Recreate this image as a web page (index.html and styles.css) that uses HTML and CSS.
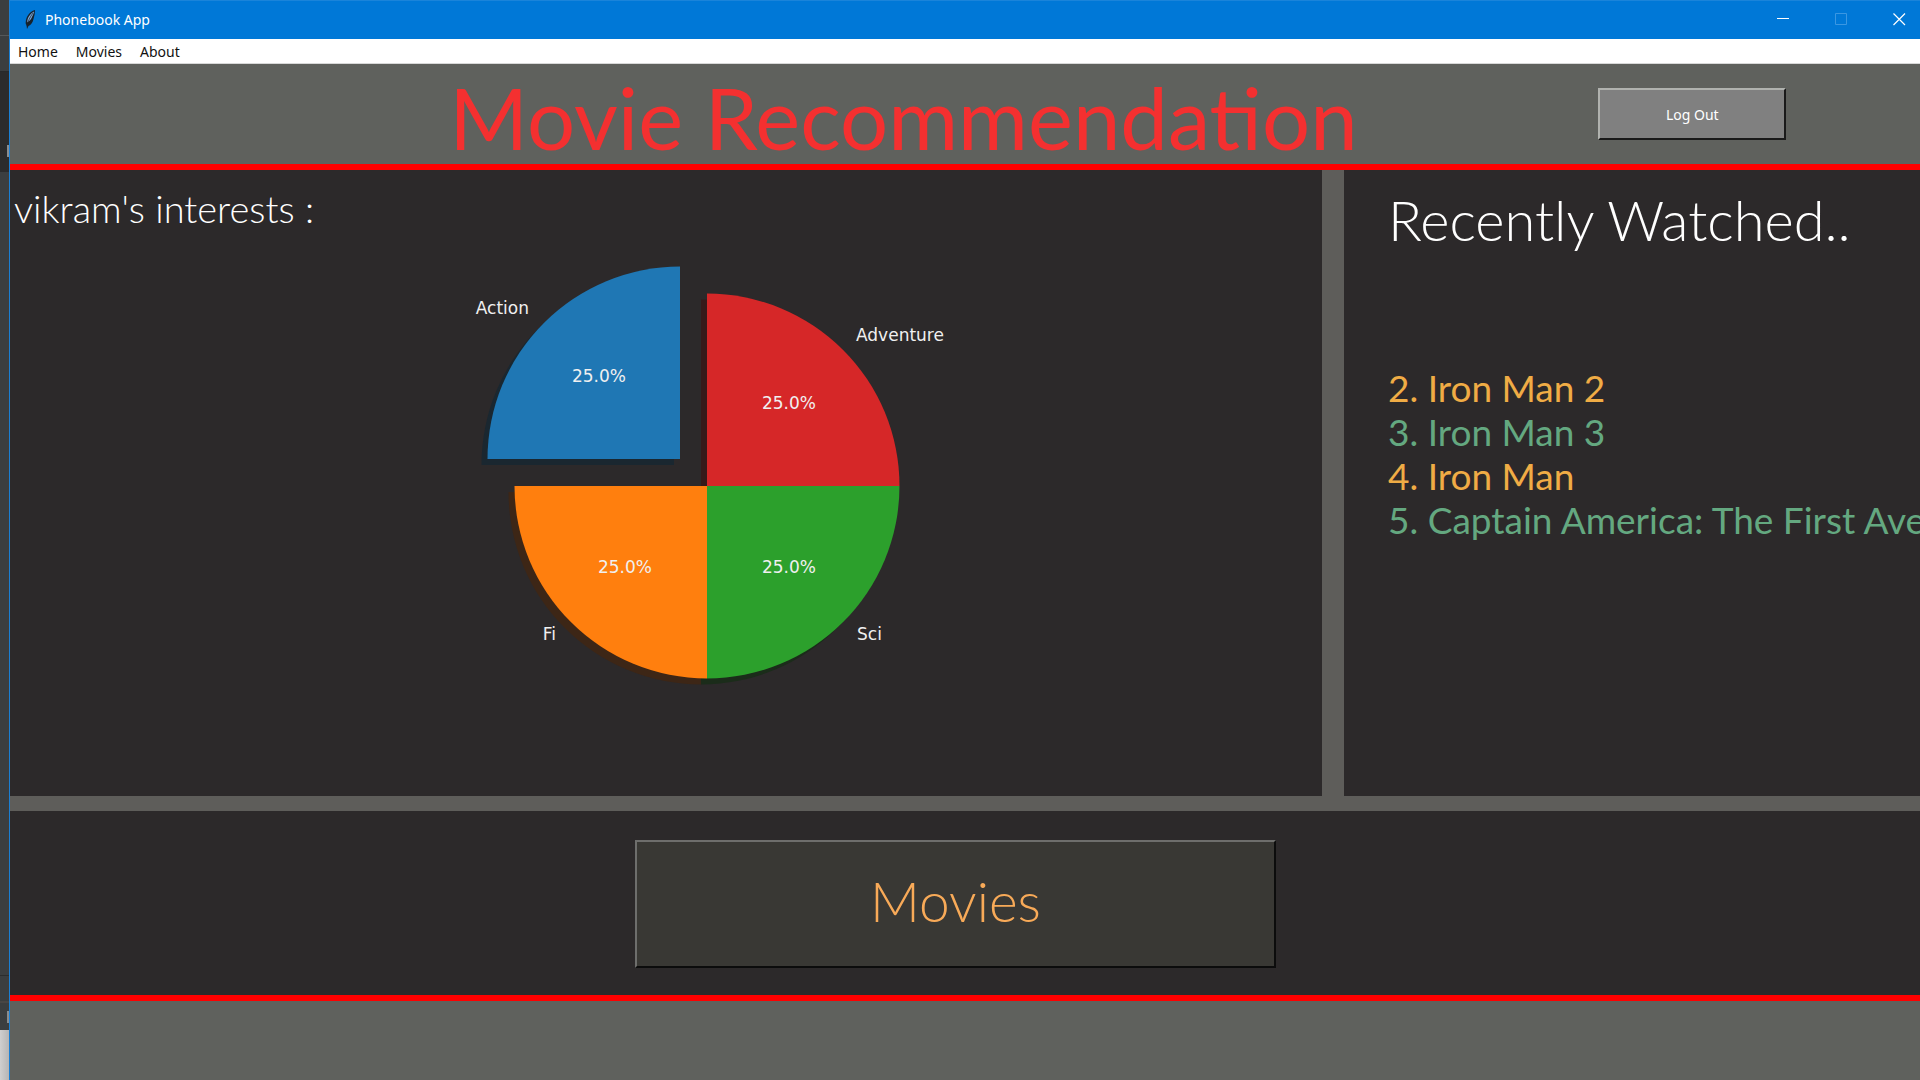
FILE: index.html
```html
<!DOCTYPE html>
<html lang="en">
<head>
<meta charset="utf-8">
<title>Phonebook App</title>
<link rel="stylesheet" href="styles.css">
</head>
<body>
<div class="backdrop" aria-hidden="true">
  <div class="backdrop-bar"></div>
  <div class="backdrop-tabs"></div>
  <div class="backdrop-dark"><span class="backdrop-mark"></span></div>
  <div class="backdrop-body"></div>
  <div class="backdrop-status"></div>
  <div class="backdrop-task"><span class="backdrop-mark"></span></div>
  <div class="backdrop-page"></div>
</div>
<div class="window">
  <div class="titlebar">
    <svg class="feather" width="16" height="22" viewBox="0 0 16 22" aria-hidden="true">
      <path d="M12 1C8 2 4 6 3 11c-.5 3-.5 4 .5 5L4 20l1.500-3C8 16 10 13 10.500 10 11.500 7 12 4 12 1z" fill="#16222c"/>
      <path d="M11 2.500C7 5 4.500 8 4.200 13.500c2-1 4-3 4.800-5.500 1-2 1.800-3.500 2-5.500z" fill="#7fa9d8"/>
      <path d="M10 4C7 8 5 12 4 17" fill="none" stroke="#16222c" stroke-width=".7"/>
    </svg>
    <span class="app-name">Phonebook App</span>
    <div class="controls">
      <button class="control" aria-label="Minimize"><svg width="13" height="13" viewBox="0 0 13 13"><path d="M0 5.500h12" stroke="#fff"/></svg></button>
      <button class="control" aria-label="Maximize" disabled><svg width="13" height="13" viewBox="0 0 13 13"><path d="M.5.5h11v11H.5z" fill="none" stroke="#3b97e2"/></svg></button>
      <button class="control" aria-label="Close"><svg width="13" height="13" viewBox="0 0 13 13"><path d="M.5.5l11.500 11.500M12 .5L.5 12" stroke="#fff" stroke-width="1.200"/></svg></button>
    </div>
  </div>
  <nav class="menu">
    <a href="#home">Home</a>
    <a href="#movies">Movies</a>
    <a href="#about">About</a>
  </nav>
  <header class="header">
    <h1 class="title">Movie Recommendation</h1>
    <button class="logout">Log Out</button>
  </header>
  <main class="panels">
    <section class="interests">
      <h2 class="interests-title">vikram's interests :</h2>
      <svg class="pie" width="800" height="480" viewBox="266 230 800 480" role="img" aria-label="Interests by genre">
        <g transform="translate(-6 6)">
          <path d="M680 459V266.500A192.500 192.500 0 0 0 487.500 459z" fill="#1a2730"/>
          <path d="M707 486H514.500A192.500 192.500 0 0 0 707 678.500z" fill="#3d2616"/>
          <path d="M707 486V678.500A192.500 192.500 0 0 0 899.500 486z" fill="#1b2c1a"/>
          <path d="M707 486H899.500A192.500 192.500 0 0 0 707 293.500z" fill="#361a1a"/>
        </g>
        <path d="M680 459V266.500A192.500 192.500 0 0 0 487.500 459z" fill="#1f77b4"/>
        <path d="M707 486H514.500A192.500 192.500 0 0 0 707 678.500z" fill="#ff7f0e"/>
        <path d="M707 486V678.500A192.500 192.500 0 0 0 899.500 486z" fill="#2ca02c"/>
        <path d="M707 486H899.500A192.500 192.500 0 0 0 707 293.500z" fill="#d62728"/>
        <g class="pie-text">
          <text x="529" y="314" text-anchor="end">Action</text>
          <text x="856" y="341">Adventure</text>
          <text x="556" y="640" text-anchor="end">Fi</text>
          <text x="857" y="640">Sci</text>
          <g text-anchor="middle">
            <text x="599" y="382">25.0%</text>
            <text x="789" y="409">25.0%</text>
            <text x="625" y="573">25.0%</text>
            <text x="789" y="573">25.0%</text>
          </g>
        </g>
      </svg>
    </section>
    <section class="recent">
      <h2 class="recent-title">Recently Watched..</h2>
      <ul class="recent-list">
        <li>2. Iron Man 2</li>
        <li>3. Iron Man 3</li>
        <li>4. Iron Man</li>
        <li>5. Captain America: The First Avenger</li>
      </ul>
    </section>
  </main>
  <section class="actions">
    <button class="movies">Movies</button>
  </section>
  <footer class="footer"></footer>
</div>
</body>
</html>
```
FILE: styles.css
```css
* { box-sizing: border-box; }

body {
  margin: 0;
  min-height: 100vh;
  display: flex;
  overflow-x: hidden;
  background: #2c292a;
  font-family: "Segoe UI", "Noto Sans", sans-serif;
}

h1, h2, ul { margin: 0; padding: 0; }

/* Sliver of the editor behind the window */
.backdrop {
  width: 9px;
  flex: none;
  display: flex;
  flex-direction: column;
  background: #3b3e40;
}
.backdrop-bar { height: 36px; border-bottom: 1px solid #55585a; }
.backdrop-tabs { height: 36px; border-bottom: 1px solid #28292a; }
.backdrop-dark { height: 100px; padding-top: 73px; background: #2b2b2c; }
.backdrop-body { flex: 1; }
.backdrop-status { height: 28px; border-top: 1px solid #2b2d2e; border-bottom: 2px solid #484645; }
.backdrop-task { height: 27px; padding-top: 8px; }
.backdrop-page { height: 50px; background: linear-gradient(90deg, #cfcfcf, #b5b5b5); }
.backdrop-mark { display: block; width: 2px; height: 12px; margin-left: auto; background: #8a8c8e; }

.window {
  flex: 1;
  min-width: 0;
  display: flex;
  flex-direction: column;
  border-left: 1px solid #1a7fd4;
}

.titlebar {
  height: 39px;
  display: flex;
  align-items: center;
  padding: 0 0 1px 13px;
  gap: 6px;
  background: #0078d7;
  border-top: 1px solid #1a84da;
  color: #fff;
}
.app-name { font-size: 14px; }
.controls { display: flex; margin-left: auto; margin-right: -8px; }
.control {
  width: 58px;
  height: 37px;
  padding: 0;
  border: 0;
  background: none;
  display: grid;
  place-items: center;
}

.menu {
  height: 25px;
  display: flex;
  align-items: center;
  gap: 18px;
  padding-left: 8px;
  background: #fff;
  border-bottom: 1px solid #d8d8d8;
}
.menu a { color: #111; font-size: 14px; text-decoration: none; }

.header {
  height: 106px;
  display: flex;
  align-items: center;
  justify-content: space-between;
  padding: 0 7% 0 23%;
  background: #5f615d;
  border-bottom: 6px solid #f00;
}
.title, .interests-title, .recent-title, .recent-list, .movies {
  font-family: "Ink Free", Lato, cursive;
}
.title { padding-top: 6px; font-size: 85px; line-height: 94px; font-weight: 400; color: #f43030; white-space: nowrap; }

.logout {
  width: 188px;
  height: 52px;
  border: 2px solid;
  border-color: #b0b2ae #1a1a1a #1a1a1a #b0b2ae;
  background: #808080;
  color: #fff;
  font: 14px "Segoe UI", "Noto Sans", sans-serif;
}

.panels {
  flex: 1;
  display: grid;
  grid-template-columns: 41fr 18fr;
  gap: 22px;
  background: #5e5d5a;
  border-bottom: 15px solid #5e5d5a;
}
.interests, .recent { min-width: 0; background: #2c292a; }
.interests-title { padding: 16px 4px 0; font-size: 38px; line-height: 44px; font-weight: 300; color: #fff; }
.pie { display: block; margin: 0 auto; max-width: 100%; }
.pie-text { font-family: "DejaVu Sans", sans-serif; font-size: 17px; fill: #f0f0f0; }

.recent { padding: 16px 0 0 44px; overflow: hidden; }
.recent-title { font-size: 56px; line-height: 68px; font-weight: 300; color: #fff; white-space: nowrap; }
.recent-list { list-style: none; margin-top: 112px; font-size: 37px; line-height: 44px; white-space: nowrap; }
.recent-list li { color: #f0ac45; }
.recent-list li:nth-child(even) { color: #64a880; }

.actions {
  display: flex;
  justify-content: center;
  padding: 29px 1% 27px 0;
  background: #2c292a;
  border-bottom: 6px solid #f00;
}
.movies {
  width: 641px;
  height: 128px;
  padding: 0 0 6px;
  border: 2px solid;
  border-color: #6e6e6c #0c0c0c #0c0c0c #6e6e6c;
  background: #393834;
  color: #f8aa58;
  font-size: 55px;
  font-weight: 300;
}

.footer { height: 79px; background: #5f615d; }
```
